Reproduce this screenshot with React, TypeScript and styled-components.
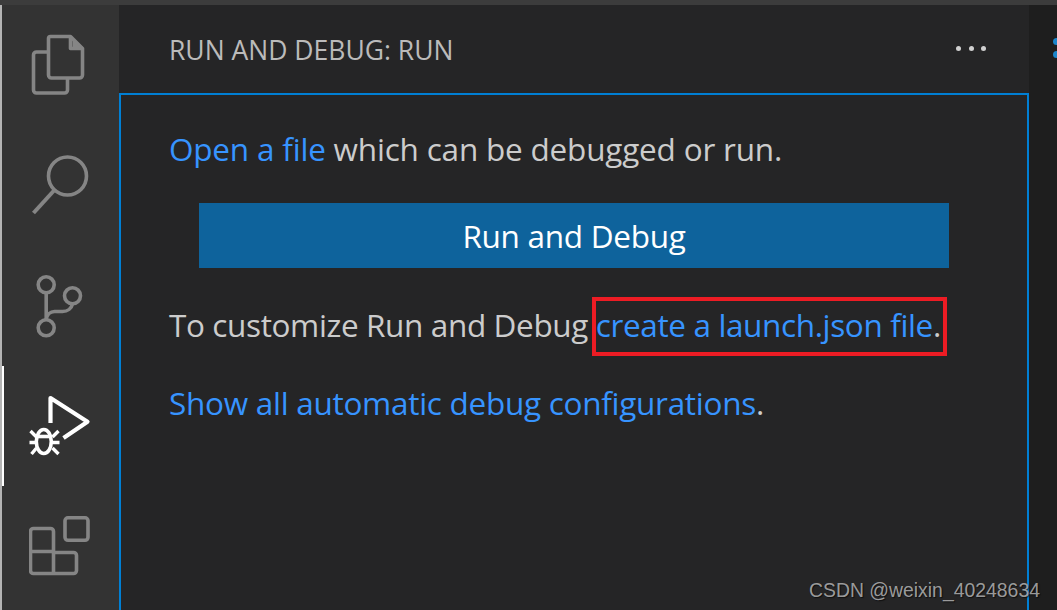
import React from "react";
import styled, { createGlobalStyle } from "styled-components";

const GlobalStyle = createGlobalStyle`
  html, body {
    margin: 0;
    padding: 0;
    background: #252526;
  }
  * {
    box-sizing: border-box;
  }
`;

const Window = styled.div`
  position: relative;
  display: flex;
  flex-direction: column;
  width: 1057px;
  height: 610px;
  overflow: hidden;
  font-family: "Open Sans", "Noto Sans", sans-serif;
`;

const TitleEdge = styled.div`
  height: 5px;
  flex: none;
  background: #3c3c3c;
`;

const Main = styled.div`
  display: flex;
  flex: 1;
  min-height: 0;
`;

const ActivityBar = styled.nav`
  display: flex;
  flex-direction: column;
  width: 119px;
  flex: none;
  background: #333333;
  border-left: 2px solid #b4b4b4;
`;

const ActivityItem = styled.div<{ $active?: boolean }>`
  position: relative;
  display: flex;
  align-items: center;
  justify-content: center;
  height: 120.25px;
  flex: none;
  color: ${(p) => (p.$active ? "#ffffff" : "#858585")};
  border-left: 2px solid ${(p) => (p.$active ? "#ffffff" : "transparent")};
  padding-right: 2px;
`;

const IconSvg = styled.svg`
  width: 64px;
  height: 64px;
  fill: none;
  stroke: currentColor;
  stroke-width: 3.6;
  stroke-linejoin: round;
`;

const SideBar = styled.section`
  display: flex;
  flex-direction: column;
  width: 910px;
  flex: none;
  background: #252526;
`;

const PanelHeader = styled.header`
  display: flex;
  align-items: center;
  justify-content: space-between;
  height: 88px;
  flex: none;
  padding: 2px 43px 0 50px;
`;

const PanelTitle = styled.h2`
  margin: 0;
  font-size: 26.5px;
  font-weight: 400;
  color: #bbbbbb;
`;

const MoreDots = styled.div`
  display: flex;
  gap: 7.5px;
  margin-top: -4px;
`;

const Dot = styled.span`
  width: 5px;
  height: 5px;
  border-radius: 50%;
  background: #d0d0d0;
`;

const PanelBody = styled.div`
  flex: 1;
  border: 2px solid #007fd4;
  border-bottom: none;
  padding: 32px 48px 0;
`;

const Line = styled.p<{ $gap?: number; $spacing?: number }>`
  position: relative;
  width: max-content;
  margin: ${(p) => p.$gap ?? 0}px 0 0;
  font-size: 31.5px;
  line-height: 44px;
  letter-spacing: ${(p) => p.$spacing ?? -0.28}px;
  color: #cccccc;
`;

const TextLink = styled.a`
  color: #3794ff;
  text-decoration: none;
`;

const RunButton = styled.button`
  display: block;
  width: 750px;
  height: 65px;
  margin: 32px 0 0 30px;
  padding: 0;
  border: none;
  background: #0e639c;
  color: #ffffff;
  font-family: inherit;
  font-size: 31.5px;
  letter-spacing: -0.28px;
`;

const Annotation = styled.span`
  position: absolute;
  left: 423px;
  top: -6px;
  width: 355px;
  height: 59px;
  border: 4px solid #ed1c24;
`;

const EditorStrip = styled.div`
  display: flex;
  flex-direction: column;
  gap: 6px;
  flex: 1;
  padding: 33px 0 0 24px;
  background: #1e1e1e;
`;

const StripDot = styled.span`
  width: 7px;
  height: 7px;
  border-radius: 50%;
  background: #1c86cc;
`;

const Watermark = styled.span`
  position: absolute;
  left: 809px;
  top: 579px;
  font-family: "Liberation Sans", Arial, sans-serif;
  font-size: 19.4px;
  line-height: 22px;
  color: rgba(190, 190, 190, 0.8);
  text-shadow: 1px 1px 1px rgba(0, 0, 0, 0.6);
`;

const App: React.FC = () => {
  return (
    <>
      <GlobalStyle />
      <Window>
        <TitleEdge />
        <Main>
          <ActivityBar>
            <ActivityItem>
              <IconSvg viewBox="28.5 33 64 64">
                <path d="M50 36.5H70L82 48.5V75A3 3 0 0 1 79 78H51A3 3 0 0 1 48 75V38.5A2 2 0 0 1 50 36.5Z" />
                <path d="M70 36.5V48.5H82" />
                <path d="M72 38L81 48H72Z" fill="currentColor" stroke="none" />
                <path d="M48 52H36A3 3 0 0 0 33 55V90A3 3 0 0 0 36 93H64A3 3 0 0 0 67 90V78" />
              </IconSvg>
            </ActivityItem>
            <ActivityItem>
              <IconSvg viewBox="28.5 153 64 64">
                <circle cx="67" cy="176" r="19" />
                <path d="M54 190L33 213" strokeWidth="4" />
              </IconSvg>
            </ActivityItem>
            <ActivityItem>
              <IconSvg viewBox="28.5 273.5 64 64">
                <circle cx="45.7" cy="284.3" r="8" />
                <circle cx="72" cy="295.3" r="8" />
                <circle cx="45.7" cy="327.3" r="8" />
                <path d="M45.7 292.3V319.3" />
                <path d="M72 303.3C71 308 67 311 62 311H54C50 311 46.5 314 45.7 319" />
              </IconSvg>
            </ActivityItem>
            <ActivityItem $active>
              <IconSvg viewBox="28.5 394 64 64">
                <path d="M50 423V398L87 421.7L63 438" strokeWidth="4.2" />
                <ellipse cx="43.3" cy="441.5" rx="7.5" ry="12" />
                <path d="M36 436.5H51" />
                <path d="M30 431L36 437M58 431L52 437M29 442.5H36M59 442.5H51M31 454L36 448M58 454L52 448" strokeWidth="3.4" />
              </IconSvg>
            </ActivityItem>
            <ActivityItem>
              <IconSvg viewBox="28.5 514 64 64">
                <rect x="64.5" y="517.8" width="23" height="22.5" rx="3" />
                <path d="M30 531.5A3 3 0 0 1 33 528.5H50A3 3 0 0 1 53 531.5V552.5H73A3 3 0 0 1 76 555.5V570.5A3 3 0 0 1 73 573.5H33A3 3 0 0 1 30 570.5Z" />
                <path d="M30 551.5H53V573.5" />
              </IconSvg>
            </ActivityItem>
          </ActivityBar>
          <SideBar>
            <PanelHeader>
              <PanelTitle>RUN AND DEBUG: RUN</PanelTitle>
              <MoreDots>
                <Dot />
                <Dot />
                <Dot />
              </MoreDots>
            </PanelHeader>
            <PanelBody>
              <Line $spacing={-0.2}>
                <TextLink>Open a file</TextLink> which can be debugged or run.
              </Line>
              <RunButton>Run and Debug</RunButton>
              <Line $gap={35} $spacing={-0.37}>
                To customize Run and Debug <TextLink>create a launch.json file</TextLink>.
                <Annotation />
              </Line>
              <Line $gap={34}>
                <TextLink>Show all automatic debug configurations</TextLink>.
              </Line>
            </PanelBody>
          </SideBar>
          <EditorStrip>
            <StripDot />
            <StripDot />
          </EditorStrip>
        </Main>
        <Watermark>CSDN @weixin_40248634</Watermark>
      </Window>
    </>
  );
};

export default App;
